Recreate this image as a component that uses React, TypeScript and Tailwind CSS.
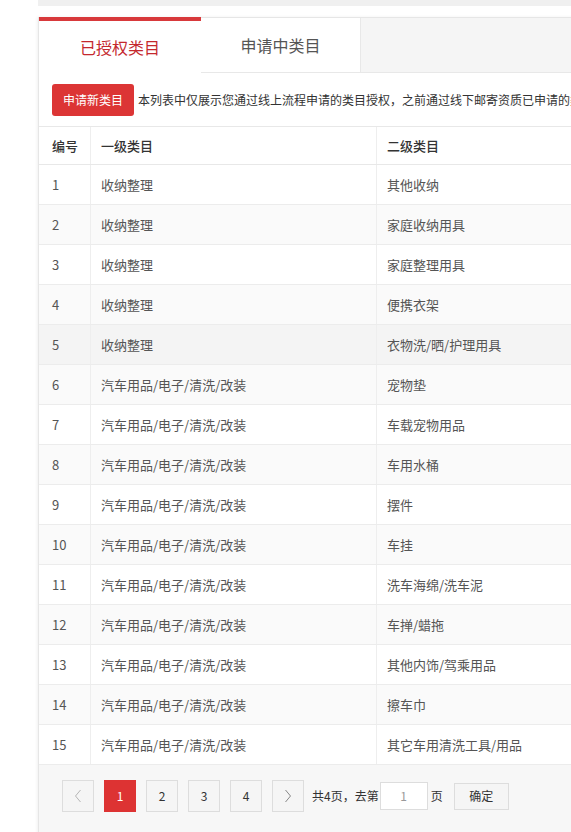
import React from "react";

const rows: [string, string][] = [
  ["收纳整理", "其他收纳"],
  ["收纳整理", "家庭收纳用具"],
  ["收纳整理", "家庭整理用具"],
  ["收纳整理", "便携衣架"],
  ["收纳整理", "衣物洗/晒/护理用具"],
  ["汽车用品/电子/清洗/改装", "宠物垫"],
  ["汽车用品/电子/清洗/改装", "车载宠物用品"],
  ["汽车用品/电子/清洗/改装", "车用水桶"],
  ["汽车用品/电子/清洗/改装", "摆件"],
  ["汽车用品/电子/清洗/改装", "车挂"],
  ["汽车用品/电子/清洗/改装", "洗车海绵/洗车泥"],
  ["汽车用品/电子/清洗/改装", "车掸/蜡拖"],
  ["汽车用品/电子/清洗/改装", "其他内饰/驾乘用品"],
  ["汽车用品/电子/清洗/改装", "擦车巾"],
  ["汽车用品/电子/清洗/改装", "其它车用清洗工具/用品"],
];

function rowBg(i: number) {
  if (i === 4) return "bg-[#f4f4f4]";
  return i % 2 === 1 ? "bg-[#fafafa]" : "bg-white";
}

export default function App() {
  return (
    <div
      className="w-[571px] h-[832px] overflow-hidden bg-white"
      style={{ fontFamily: '"Noto Sans CJK SC", "Noto Sans", sans-serif' }}
    >
      <div className="pl-[38px]">
        <div className="h-[6px] bg-[#f0f0f0] w-[760px]" />
        <div className="mt-[11px] w-[760px] border-l border-t border-[#e6e6e6] shadow-[-1px_0_3px_rgba(0,0,0,0.06)]">
          {/* tabs */}
          <div className="flex h-[55px] bg-[#f5f5f5]">
            <div className="w-[162px] bg-white border-t-[4px] border-[#d8393b] -mt-px flex items-center justify-center text-[16px] text-[#c4282d]">
              已授权类目
            </div>
            <div className="w-[160px] bg-white border-b border-r border-[#e8e8e8] flex items-center justify-center text-[16px] text-[#555]">
              申请中类目
            </div>
            <div className="flex-1 border-b border-[#e8e8e8]" />
          </div>
          {/* notice */}
          <div className="h-[54px] flex items-center pl-[13px] gap-[4px] border-b border-[#e8e8e8] bg-white">
            <button className="h-[32px] w-[82px] rounded-[3px] bg-[#dc3535] text-white text-[12px] shrink-0">
              申请新类目
            </button>
            <span className="text-[12px] text-[#333] whitespace-nowrap">
              本列表中仅展示您通过线上流程申请的类目授权，之前通过线下邮寄资质已申请的类目授权请到其他页面查看
            </span>
          </div>
          {/* table */}
          <div className="text-[13px]">
            <div className="flex h-[38px] border-b border-[#e8e8e8] bg-white text-[#333] font-medium">
              <div className="w-[52px] pl-[13px] flex items-center border-r border-[#eeeeee]">编号</div>
              <div className="w-[286px] pl-[10px] flex items-center border-r border-[#eeeeee]">一级类目</div>
              <div className="w-[286px] pl-[10px] flex items-center border-r border-[#eeeeee]">二级类目</div>
              <div className="flex-1" />
            </div>
            {rows.map((r, i) => (
              <div key={i} className={`flex h-[40px] border-b border-[#ececec] text-[#555] ${rowBg(i)}`}>
                <div className="w-[52px] pl-[13px] flex items-center border-r border-[#eeeeee]">{i + 1}</div>
                <div className="w-[286px] pl-[10px] flex items-center border-r border-[#eeeeee]">{r[0]}</div>
                <div className="w-[286px] pl-[10px] flex items-center border-r border-[#eeeeee]">{r[1]}</div>
                <div className="flex-1" />
              </div>
            ))}
          </div>
          {/* pagination */}
          <div className="h-[70px] bg-[#f7f7f7] flex items-start pt-[15px] pl-[23px] text-[12px] text-[#333]">
            <div className="flex items-center gap-[10px]">
              <div className="w-[32px] h-[32px] border border-[#dddddd] bg-[#f5f5f5] flex items-center justify-center">
                <svg width="8" height="14" viewBox="0 0 8 14" fill="none" stroke="#b5b5b5" strokeWidth="1">
                  <path d="M6.5 1 L1.5 7 L6.5 13" />
                </svg>
              </div>
              <div className="w-[32px] h-[32px] bg-[#dd3333] text-white flex items-center justify-center">1</div>
              <div className="w-[32px] h-[32px] border border-[#dddddd] bg-[#f5f5f5] flex items-center justify-center">2</div>
              <div className="w-[32px] h-[32px] border border-[#dddddd] bg-[#f5f5f5] flex items-center justify-center">3</div>
              <div className="w-[32px] h-[32px] border border-[#dddddd] bg-[#f5f5f5] flex items-center justify-center">4</div>
              <div className="w-[32px] h-[32px] border border-[#dddddd] bg-[#f5f5f5] flex items-center justify-center">
                <svg width="8" height="14" viewBox="0 0 8 14" fill="none" stroke="#888" strokeWidth="1">
                  <path d="M1.5 1 L6.5 7 L1.5 13" />
                </svg>
              </div>
            </div>
            <div className="flex items-center h-[32px] ml-[8px]">
              <span>共4页，去第</span>
              <div className="w-[48px] h-[28px] border border-[#dddddd] bg-white flex items-center justify-center text-[#999] ml-[1px]">1</div>
              <span className="ml-[3px]">页</span>
              <div className="ml-[11px] w-[55px] h-[27px] border border-[#dddddd] bg-[#f5f5f5] flex items-center justify-center">确定</div>
            </div>
          </div>
        </div>
      </div>
    </div>
  );
}
